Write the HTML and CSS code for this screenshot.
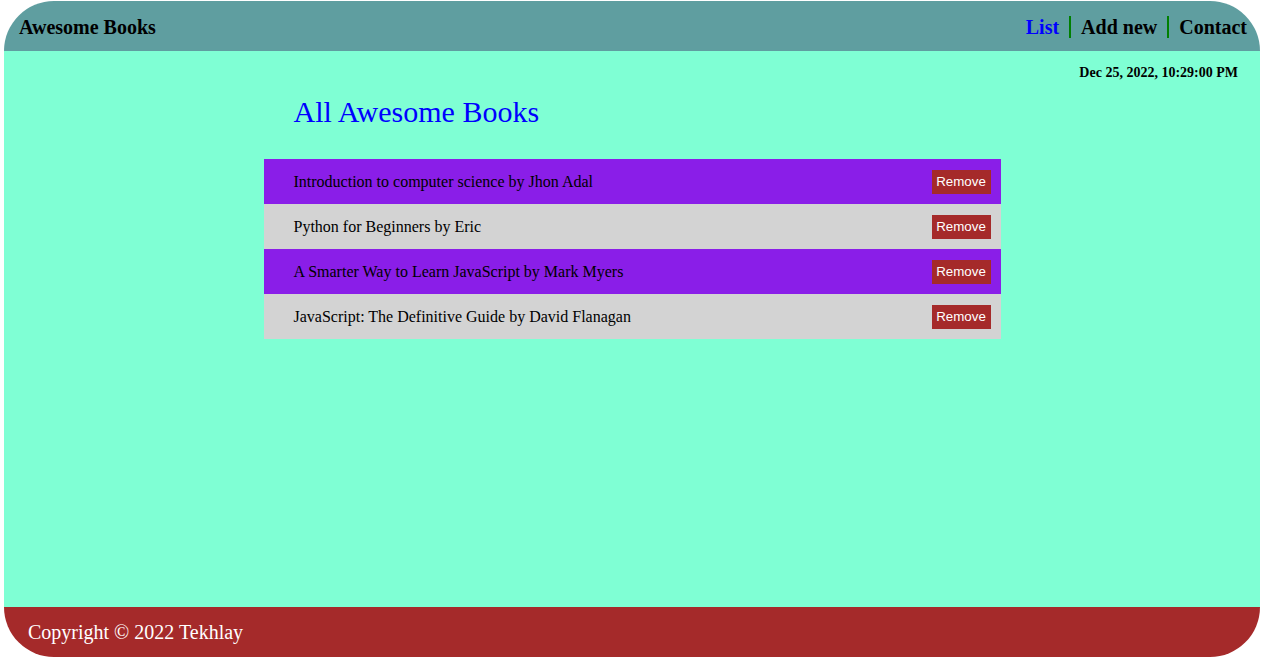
FILE: index.html
```html
<!DOCTYPE html>
<html lang="en">
<head>
<meta charset="utf-8">
<title>Awesome Books</title>
<link rel="stylesheet" href="styles.css">
</head>
<body>
<div class="page">
  <header class="topbar">
    <h1 class="brand">Awesome Books</h1>
    <nav class="nav">
      <a class="nav-link active" href="#">List</a>
      <a class="nav-link sep" href="#">Add new</a>
      <a class="nav-link sep" href="#">Contact</a>
    </nav>
  </header>
  <main class="main">
    <p class="date">Dec 25, 2022, 10:29:00 PM</p>
    <section class="books">
      <h2 class="title">All Awesome Books</h2>
      <ul class="book-list">
        <li class="book odd"><span>Introduction to computer science by Jhon Adal</span><button class="remove">Remove</button></li>
        <li class="book even"><span>Python for Beginners by Eric</span><button class="remove">Remove</button></li>
        <li class="book odd"><span>A Smarter Way to Learn JavaScript by Mark Myers</span><button class="remove">Remove</button></li>
        <li class="book even"><span>JavaScript: The Definitive Guide by David Flanagan</span><button class="remove">Remove</button></li>
      </ul>
    </section>
  </main>
  <footer class="footer">
    <p>Copyright © 2022 Tekhlay</p>
  </footer>
</div>
</body>
</html>
```
FILE: styles.css
```css
html, body { margin: 0; padding: 0; background: #fff; }
body {
  font-family: "Liberation Serif", "Times New Roman", serif;
  padding: 1px 4px 0;
  overflow: hidden;
  height: 656px;
}
.page {
  display: flex;
  flex-direction: column;
  height: 656px;
}
.topbar {
  height: 50px;
  flex: 0 0 50px;
  background: #5f9ea0;
  border-radius: 50px 50px 0 0;
  display: flex;
  align-items: center;
  justify-content: space-between;
  padding: 2px 13px 0 15px;
  box-sizing: border-box;
}
.brand {
  margin: 0;
  font-size: 20px;
  font-weight: bold;
  color: #000;
}
.nav { display: flex; align-items: center; }
.nav-link {
  color: #000;
  font-weight: bold;
  font-size: 20px;
  text-decoration: none;
  padding: 0 10px;
  line-height: 22px;
}
.nav-link:last-child { padding-right: 0; }
.nav-link.active { color: #00f; }
.nav-link.sep { border-left: 2px solid green; }
.main {
  flex: 1;
  background: #7fffd4;
  display: flex;
  flex-direction: column;
}
.date {
  margin: 14px 22px 0 0;
  text-align: right;
  font-weight: bold;
  font-size: 14px;
}
.books {
  width: 737px;
  margin: 0 auto;
}
.title {
  margin: 14px 0 0 30px;
  font-weight: normal;
  font-size: 30px;
  color: #00f;
  line-height: 34px;
}
.book-list {
  list-style: none;
  margin: 30px 0 0;
  padding: 0;
}
.book {
  height: 45px;
  display: flex;
  align-items: center;
  justify-content: space-between;
  padding: 0 10px 0 30px;
  font-size: 16px;
}
.book.odd { background: #8a1ee8; }
.book.even { background: #d3d3d3; }
.remove {
  background: #a52a2a;
  color: #fff;
  border: 0;
  font-family: "Liberation Sans", Arial, sans-serif;
  font-weight: normal;
  font-size: 13.333px;
  height: 24px;
  width: 59px;
  padding: 0;
  cursor: pointer;
}
.footer {
  height: 50px;
  flex: 0 0 50px;
  background: #a52a2a;
  border-radius: 0 0 50px 50px;
  display: flex;
  align-items: center;
  padding-left: 24px;
}
.footer p {
  margin: 0;
  color: #fff;
  font-size: 20px;
}
```
